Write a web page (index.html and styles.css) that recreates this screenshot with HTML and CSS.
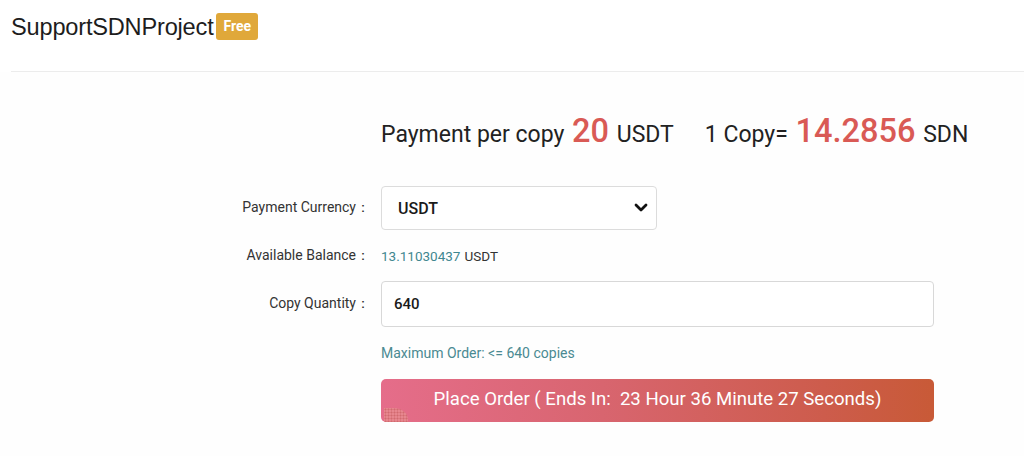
FILE: index.html
```html
<!DOCTYPE html>
<html>
<head>
<meta charset="utf-8">
<link rel="stylesheet" href="styles.css">
</head>
<body>
<header class="top">
  <h1 class="title">SupportSDNProject</h1><span class="badge">Free</span>
</header>
<main class="main">
  <div class="price-row">
    <span class="price-item">Payment per copy <span class="num">20</span> USDT</span>
    <span class="price-item">1 Copy= <span class="num">14.2856</span> SDN</span>
  </div>
  <div class="form">
    <div class="label lbl-select">Payment Currency：</div>
    <div class="control">
      <div class="select">
        <span>USDT</span>
        <svg class="chev" width="14" height="10" viewBox="0 0 14 10"><path d="M2 2 L7 7 L12 2" fill="none" stroke="#111" stroke-width="2.8" stroke-linecap="round" stroke-linejoin="round"/></svg>
      </div>
    </div>
    <div class="label lbl-bal">Available Balance：</div>
    <div class="control balance"><span class="teal">13.11030437</span> USDT</div>
    <div class="label lbl-qty">Copy Quantity：</div>
    <div class="control"><div class="input">640</div></div>
    <div></div>
    <div class="control hint">Maximum Order: &lt;= 640 copies</div>
    <div></div>
    <div class="control">
      <div class="btn">Place Order ( Ends In:&nbsp; 23 Hour 36 Minute 27 Seconds)<span class="dots"></span></div>
    </div>
  </div>
</main>
</body>
</html>
```

FILE: styles.css
```css
html, body {
  margin: 0;
  padding: 0;
  background: #fff;
}
body {
  font-family: Roboto, "Liberation Sans", sans-serif;
  color: #222;
  width: 1024px;
  height: 456px;
  overflow: hidden;
}
.top {
  display: flex;
  align-items: center;
  height: 72px;
  margin-left: 11px;
  border-bottom: 1px solid #ececec;
  box-sizing: border-box;
  padding-bottom: 16px;
}
.title {
  margin: 0;
  font-family: "Liberation Sans", Arial, sans-serif;
  font-weight: 400;
  font-size: 23.6px;
  color: #1d1d1d;
  letter-spacing: -0.2px;
}
.badge {
  margin-left: 3px;
  background: #e0a83a;
  color: #fff;
  font-size: 14px;
  font-weight: 700;
  line-height: 27px;
  padding: 0 7px;
  border-radius: 3px;
  font-family: Roboto, sans-serif;
  position: relative;
  top: -1px;
}
.main {
  background: #fefefe;
  height: 384px;
}
.price-row {
  padding-left: 381px;
  padding-top: 40px;
  height: 72px;
  box-sizing: border-box;
  display: flex;
  gap: 31px;
  align-items: baseline;
  font-size: 23px;
  color: #222;
}
.num {
  color: #d95a55;
  font-size: 32.5px;
  font-weight: 500;
  margin: 0 2px;
}
.form {
  display: grid;
  grid-template-columns: 370px 553px;
  column-gap: 11px;
  margin-top: 42px;
  align-items: center;
}
.label {
  text-align: right;
  font-size: 14px;
  color: #333;
}
.select {
  width: 276px;
  height: 44px;
  box-sizing: border-box;
  border: 1px solid #dcdcdc;
  border-radius: 4px;
  background: #fff;
  display: flex;
  align-items: center;
  justify-content: space-between;
  padding: 0 8px 0 16px;
  font-size: 16px;
  font-weight: 500;
  color: #1a1a1a;
}
.balance {
  height: 51px;
  display: flex;
  align-items: center;
  font-size: 13.5px;
  color: #333;
  gap: 4px;
}
.teal { color: #3f8790; }
.input {
  height: 46px;
  box-sizing: border-box;
  border: 1px solid #d8d8d8;
  border-radius: 4px;
  background: #fff;
  display: flex;
  align-items: center;
  padding-left: 12px;
  font-size: 15px;
  font-weight: 500;
  color: #1a1a1a;
}
.hint {
  height: 52px;
  display: flex;
  align-items: center;
  font-size: 14px;
  color: #4a8a92;
}
.btn {
  position: relative;
  height: 43px;
  border-radius: 5px;
  background: linear-gradient(90deg, #e56d8a 0%, #d8656f 40%, #cd5c4c 80%, #c85a37 100%);
  color: #fff;
  font-size: 18.6px;
  display: flex;
  align-items: center;
  justify-content: center;
  padding-bottom: 4px;
  box-sizing: border-box;
  overflow: hidden;
}
.dots {
  position: absolute;
  left: 3px;
  bottom: 0;
  width: 24px;
  height: 14px;
  border-top-right-radius: 14px 12px;
  background-color: #e7868e;
  background-image: radial-gradient(circle, #d26a6f 0.8px, transparent 1.2px);
  background-size: 3px 3px;
}
```
